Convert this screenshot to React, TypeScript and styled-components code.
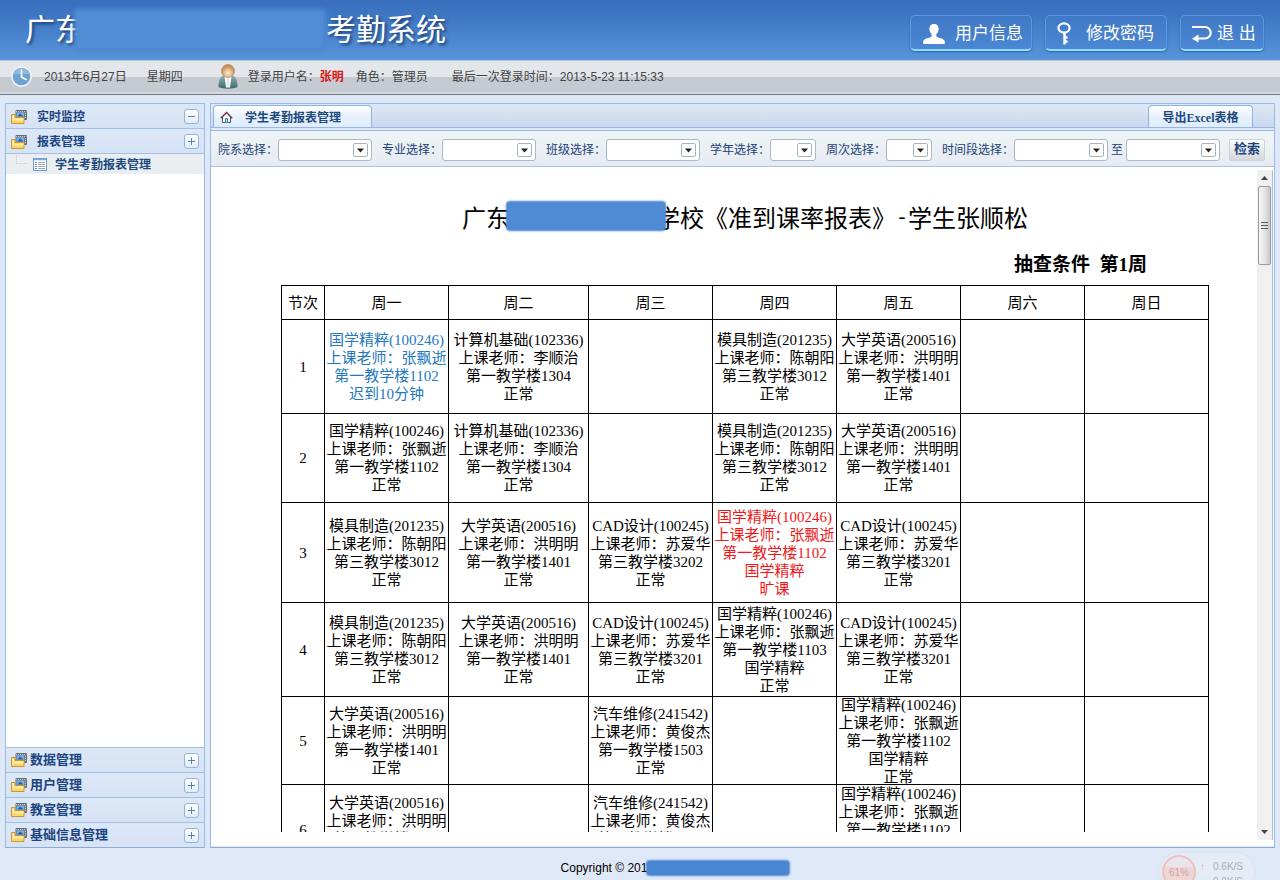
import React from 'react';
import styled, { createGlobalStyle, css } from 'styled-components';

const sans = `"Liberation Sans", "Noto Sans CJK SC", sans-serif`;
const serif = `"Liberation Serif", "Noto Sans CJK SC", serif`;

const GlobalStyle = createGlobalStyle`
  *, *::before, *::after { box-sizing: border-box; }
  body {
    margin: 0;
    background: #dfe8f6;
    font-family: ${sans};
    font-size: 12px;
    line-height: 18px;
    color: #000;
  }
  button, select { font-family: inherit; }
`;

const Page = styled.div`
  display: flex;
  flex-direction: column;
  height: 100vh;
  min-width: 1240px;
  overflow: hidden;
`;

/* ---------- header ---------- */

const Header = styled.header`
  display: flex;
  align-items: center;
  justify-content: space-between;
  flex: none;
  height: 60px;
  padding: 0 16px 0 25px;
  background: linear-gradient(#396fbd, #4179c6 35%, #5894d9);
`;

const SystemTitle = styled.h1`
  display: flex;
  align-items: center;
  margin: 0;
  color: #fff;
  font-size: 30px;
  font-weight: 400;
  line-height: 44px;
  text-shadow: 2px 2px 3px #1d3f75;
`;

const TitleMask = styled.span`
  position: relative;
  width: 246px;
  height: 36px;
  margin: 0 3px 0 -8px;
  background: #508dd5;
  box-shadow: 0 0 4px 3px #4d89d2;
`;

const HeaderActions = styled.nav`
  display: flex;
  gap: 13px;
`;

const HeaderButton = styled.button<{ $small?: boolean }>`
  display: flex;
  align-items: center;
  gap: ${(p) => (p.$small ? 5 : 9)}px;
  width: ${(p) => (p.$small ? 84 : 122)}px;
  height: 36px;
  margin-top: 6px;
  padding: 2px 0 0 ${(p) => (p.$small ? 11 : 11)}px;
  border: 1px solid #5b98e6;
  border-bottom: 2px solid #8fdcfa;
  border-radius: 5px;
  background: linear-gradient(#3f77c5, #4c88d3);
  box-shadow: 0 1px 2px #2b6a9c;
  color: #fff;
  font-size: 17px;
  line-height: 24px;
  white-space: nowrap;
`;

/* ---------- status bar ---------- */

const StatusBar = styled.div`
  display: flex;
  align-items: center;
  flex: none;
  height: 35px;
  padding: 0 11px 2px;
  border-top: 1px solid #b9c6d6;
  border-bottom: 1px solid #757a81;
  background: linear-gradient(#e3e6eb 0 16px, #c6cbd1 16px 31px, #d5dadf 31px);
  color: #444;
`;

const StatusText = styled.span<{ $gap?: number }>`
  display: flex;
  margin-left: ${(p) => p.$gap ?? 12}px;
`;

const UserName = styled.strong`
  color: #d81414;
  font-weight: 700;
`;

/* ---------- body ---------- */

const Body = styled.div`
  display: flex;
  flex: 1;
  gap: 5px;
  min-height: 0;
  padding: 8px 5px 0;
`;

const Sidebar = styled.aside`
  display: flex;
  flex-direction: column;
  flex: none;
  width: 200px;
  border: 1px solid #99bbe8;
  border-bottom-color: #8fabd0;
  background: #fff;
`;

const sectionLine = css`
  border-bottom: 1px solid #a3bfe2;
`;

const SectionHeader = styled.button<{ $large?: boolean; $line?: 'top' | 'bottom' }>`
  display: flex;
  align-items: center;
  flex: none;
  gap: ${(p) => (p.$large ? 3 : 10)}px;
  width: 100%;
  height: 25px;
  padding: ${(p) => (p.$large ? 0 : 1)}px 5px 0;
  border: 0;
  ${(p) => (p.$line === 'top' ? 'border-top: 1px solid #a3bfe2;' : sectionLine)}
  background: linear-gradient(#dde8f7, #d6e3f5);
  color: #1c4480;
  font-size: ${(p) => (p.$large ? 13 : 12)}px;
  font-weight: 700;
  line-height: 18px;
  text-align: left;
`;

const ToggleBox = styled.span`
  display: flex;
  align-items: center;
  justify-content: center;
  width: 15px;
  height: 15px;
  margin-left: auto;
  border: 1px solid #93b6da;
  border-radius: 3px;
  background: linear-gradient(#fff, #e1edfa);
`;

const Tree = styled.ul`
  flex: 1;
  margin: 0;
  padding: 0;
  list-style: none;
`;

const TreeItem = styled.li`
  display: flex;
  align-items: center;
  height: 20px;
  padding: 0 0 0 9px;
  background: #eaedf1;
`;

const TreeLink = styled.a`
  display: flex;
  align-items: center;
  gap: 8px;
  margin-left: 6px;
  padding-top: 1px;
  color: #1c4a7c;
  font-weight: 700;
  text-decoration: none;
`;

const Main = styled.main`
  display: flex;
  flex-direction: column;
  flex: 1;
  min-width: 0;
  border: 1px solid #99bbe8;
  border-bottom-color: #8fabd0;
  background: #fff;
`;

const TabStrip = styled.div`
  display: flex;
  align-items: flex-end;
  justify-content: space-between;
  flex: none;
  height: 24px;
  padding: 0 21px 0 2px;
  border-bottom: 1px solid #99b6e4;
  background: linear-gradient(#dfe8f6, #c9d8ee);
`;

const Tab = styled.button<{ $action?: boolean }>`
  display: flex;
  align-items: center;
  justify-content: ${(p) => (p.$action ? 'center' : 'flex-start')};
  gap: 12px;
  width: ${(p) => (p.$action ? 105 : 159)}px;
  height: 22px;
  padding: 2px 0 0 ${(p) => (p.$action ? 0 : 6)}px;
  border: 1px solid #8db2e3;
  border-bottom: 0;
  border-radius: 4px 4px 0 0;
  background: linear-gradient(#fff, #e8f1fc 50%, #deecfd);
  color: #1c4a7c;
  font-family: ${(p) => (p.$action ? serif : sans)};
  font-size: 12px;
  font-weight: 700;
  line-height: 18px;
`;

const FilterBar = styled.form`
  display: flex;
  align-items: center;
  flex: none;
  height: 39px;
  padding: 3px 9px 0 7px;
  border-top: 2px solid #dfe8f6;
  border-bottom: 1px solid #a9c4e4;
  background: linear-gradient(#99bbe8 0 1px, #eff5f5 1px, #e6ebf3);
  color: #1c3f77;
`;

const Field = styled.div<{ $tight?: boolean }>`
  display: flex;
  align-items: center;
  margin-right: ${(p) => (p.$tight ? 3 : 10)}px;
  white-space: nowrap;
`;

const RangeLabel = styled.label`
  margin-right: 3px;
`;

const SelectBox = styled.span<{ $short?: boolean }>`
  position: relative;
  display: flex;
  width: ${(p) => (p.$short ? 46 : 94)}px;
  height: 22px;

  svg {
    position: absolute;
    top: 4px;
    right: 4px;
    pointer-events: none;
  }
`;

const Select = styled.select`
  appearance: none;
  width: 100%;
  border: 1px solid #a9b9c6;
  border-radius: 3px;
  background: #fff;
`;

const SearchButton = styled.button`
  flex: none;
  width: 36px;
  height: 22px;
  margin-left: auto;
  padding: 0 0 3px;
  border: 1px solid #ccd3da;
  border-radius: 2px;
  background: linear-gradient(#fff, #e3e5e8 60%, #d5d7da);
  color: #1c4480;
  font-size: 13px;
  font-weight: 700;
  line-height: 18px;
`;

/* ---------- report ---------- */

const Viewer = styled.div`
  display: flex;
  flex: 1;
  min-height: 0;
  border-bottom: 1px solid #dce8f6;
`;

const Report = styled.section`
  flex: 1;
  min-width: 0;
  margin-bottom: 14px;
  padding: 34px 48px 0 70px;
  overflow: hidden;
  font-family: ${serif};
`;

const ReportTitle = styled.h2`
  display: flex;
  justify-content: center;
  margin: 0;
  font-size: 24px;
  font-weight: 400;
  line-height: 36px;
  white-space: nowrap;
`;

const ReportMask = styled.span`
  position: relative;
  width: 158px;
  height: 28px;
  margin: 1px -9px 0 -3px;
  border-radius: 3px;
  background: #4e8bd4;
  box-shadow: 0 0 2px 1px #4783cf;
`;

const Dash = styled.span`
  font-family: "Liberation Mono", monospace;
  font-size: 20px;
`;

const Condition = styled.p`
  margin: 16px 62px 8px 0;
  font-size: 19px;
  font-weight: 700;
  line-height: 24px;
  text-align: right;
  white-space: pre;
`;

const Timetable = styled.table`
  width: 100%;
  border-collapse: collapse;
  table-layout: fixed;
  font-size: 15px;
  line-height: 18px;
  text-align: center;

  th, td {
    padding: 0;
    border: 1px solid #000;
    font-weight: 400;
    white-space: nowrap;
  }
`;

const Col = styled.col<{ $w: number }>`
  width: ${(p) => p.$w}px;
`;

const HeadRow = styled.tr`
  height: 34px;
`;

const Cell = styled.div<{ $h: number; $tone?: Tone }>`
  display: flex;
  flex-direction: column;
  align-items: center;
  justify-content: center;
  height: ${(p) => p.$h - 1}px;
  overflow: hidden;
  color: ${(p) => (p.$tone === 'late' ? '#2478bd' : p.$tone === 'absent' ? '#f01818' : '#000')};
`;

const Scrollbar = styled.div`
  display: flex;
  flex-direction: column;
  align-items: center;
  flex: none;
  width: 16px;
  margin: 3px 1px 6px 0;
  border-right: 1px solid #9fbfe6;
  background: #f0f0f1;
`;

const ScrollArrow = styled.svg`
  flex: none;
  width: 15px;
  height: 16px;
`;

const Thumb = styled.div`
  display: flex;
  align-items: center;
  justify-content: center;
  width: 13px;
  height: 79px;
  border: 1px solid #9a9b9e;
  border-radius: 2px;
  background: linear-gradient(90deg, #f5f5f6, #e4e5e7 50%, #c6c7ca);
`;

const Track = styled.div`
  flex: 1;
`;

/* ---------- footer ---------- */

const Footer = styled.footer`
  position: relative;
  display: flex;
  align-items: center;
  justify-content: center;
  flex: none;
  height: 32px;
  padding: 7px 0 0 70px;
  overflow: hidden;
`;

const FooterMask = styled.span`
  position: relative;
  width: 142px;
  height: 14px;
  border-radius: 3px;
  background: #4987d3;
  box-shadow: 0 0 2px 1px #4c89d3;
`;

const SpeedWidget = styled.div`
  position: absolute;
  top: 5px;
  right: 26px;
  display: flex;
  gap: 4px;
  width: 94px;
  height: 38px;
  border-radius: 19px;
  background: #e6ecf6;
  box-shadow: 0 0 2px #d3dbe8;
  color: #a9adb6;
  font-size: 10px;
  line-height: 15px;
`;

const Gauge = styled.div`
  width: 34px;
  height: 34px;
  margin: 2px 0 0 2px;
  border: 2px solid #ecc2c0;
  border-radius: 50%;
  background: linear-gradient(#e9e5ec 35%, #efd5d4 35%);
  color: #cda5a6;
  line-height: 32px;
  text-align: center;
`;

const Speeds = styled.div`
  display: grid;
  grid-template-columns: 13px auto;
  align-content: start;
  padding-top: 6px;
`;

const Arrow = styled.span<{ $down?: boolean }>`
  color: ${(p) => (p.$down ? '#9fbfae' : '#e6a58d')};
`;

/* ---------- icons ---------- */

const ClockIcon = () => (
  <svg width="23" height="24" viewBox="0 0 23 24" aria-hidden="true">
    <circle cx="10.500" cy="12" r="10.500" fill="#cbd3dc" />
    <circle cx="10.500" cy="11.500" r="10.300" fill="#f2f6fa" />
    <circle cx="10.500" cy="11.500" r="8.800" fill="#6ea3d1" />
    <path d="M2.500 9a8.300 8.300 0 0 1 16 0z" fill="#8fbadd" />
    <path d="M10.500 5v7l4.500 2.500" fill="none" stroke="#fff" strokeWidth="1.600" strokeLinecap="round" />
  </svg>
);

const UserIcon = () => (
  <svg width="20" height="25" viewBox="0 0 20 25" aria-hidden="true">
    <defs>
      <linearGradient id="coat" x2="0" y2="1">
        <stop stopColor="#8fb0b0" />
        <stop offset="1" stopColor="#3f6a6e" />
      </linearGradient>
      <radialGradient id="face" cy=".65">
        <stop stopColor="#fff0d6" />
        <stop offset="1" stopColor="#c98f58" />
      </radialGradient>
    </defs>
    <path d="M0.500 23c0-7 2-11 6-11.500h7c4 .5 6 4.500 6 11.500-4 2.200-15 2.200-19 0z" fill="url(#coat)" />
    <path d="M6.500 12h7L12 23.500H8z" fill="#fff" />
    <path d="M9.200 13.500h1.600l.8 8-1.600 2-1.600-2z" fill="#dfe6e8" />
    <circle cx="10" cy="7" r="6.500" fill="url(#face)" stroke="#b07f50" strokeWidth=".6" />
  </svg>
);

const FolderIcon = () => (
  <svg width="16" height="16" viewBox="0 0 16 16" aria-hidden="true">
    <path d="M5 1.500h10.500v9H13l-8-2z" fill="#747e88" stroke="#626b75" />
    <path d="M5 2.500h10.500M14.500 4v6" stroke="#c3c9cf" strokeDasharray="1 1" />
    <path d="M5.500 3.500h7.500v5H5.500z" fill="#74aee6" />
    <path d="M6.500 7.500l2.500-3 3.500 3z" fill="#2d5a94" />
    <path d="M.5 14.500V5.500h3.500v3h9v6z" fill="#fbd568" stroke="#cf9338" />
    <path d="M1.500 9.500h11v2h-11z" fill="#fff0a8" />
    <path d="M1.500 6.500h1.500v3H1.500z" fill="#fff4cf" />
  </svg>
);

const SheetIcon = () => (
  <svg width="14" height="13" viewBox="0 0 14 13" aria-hidden="true">
    <rect x=".5" y=".5" width="13" height="12" fill="#fff" stroke="#6d9ac8" />
    <path d="M1 1.500h12" stroke="#7eaede" strokeWidth="1.500" />
    <path d="M5 4.500h7M5 6.500h7M5 8.500h7M5 10.500h7" stroke="#9aa9bb" />
    <path d="M2 4.500h2M2 6.500h2M2 8.500h2M2 10.500h2" stroke="#5c8fca" />
  </svg>
);

const TreeElbow = () => (
  <svg width="12" height="19" viewBox="0 0 12 19" aria-hidden="true">
    <path d="M1.500 0v9M1.500 8.500H12" fill="none" stroke="#c2c6cb" strokeDasharray="1 1" />
  </svg>
);

const HomeIcon = () => (
  <svg width="13" height="13" viewBox="0 0 13 13" aria-hidden="true">
    <path d="M2.500 6v5.500h8V6" fill="#fff" stroke="#3b5d7d" />
    <path d="M5.500 11.500v-4h2v4" fill="#cfe3f5" stroke="#3b6f9d" />
    <path d="M.8 7.200L6.500 1.500l5.700 5.700" fill="none" stroke="#7b3036" strokeWidth="1.400" />
  </svg>
);

const ToggleIcon = ({ open }: { open?: boolean }) => (
  <svg width="9" height="9" viewBox="0 0 9 9" aria-hidden="true">
    <path d={open ? 'M1 4.500h7' : 'M1 4.500h7M4.500 1v7'} stroke="#5a80ad" />
  </svg>
);

const DropIcon = () => (
  <svg width="15" height="15" viewBox="0 0 15 15" aria-hidden="true">
    <rect x=".5" y=".5" width="14" height="13" rx="1.500" fill="#fff" stroke="#a5b4c1" />
    <path d="M4 5.500h7L7.500 9.500z" fill="#222" />
  </svg>
);

const PersonIcon = () => (
  <svg width="24" height="22" viewBox="0 0 24 22" aria-hidden="true">
    <path
      d="M12 1c3 0 4.600 2 4.600 4.800 0 2.400-.9 4.200-2.200 5.200v2.600c1.600 1.400 7.800 2 8.400 4.600V21H1.200v-2.800c.6-2.600 6.800-3.200 8.400-4.600V11C8.300 10 7.400 8.200 7.400 5.800 7.400 3 9 1 12 1z"
      fill="#fff"
    />
  </svg>
);

const KeyIcon = () => (
  <svg width="20" height="24" viewBox="0 0 20 24" aria-hidden="true">
    <ellipse cx="7" cy="6" rx="5.600" ry="4.600" fill="none" stroke="#fff" strokeWidth="2.200" />
    <path d="M7.500 10.500V22.500M7.500 15.500h3M7.500 19.500h3" fill="none" stroke="#fff" strokeWidth="2.400" />
  </svg>
);

const ExitIcon = () => (
  <svg width="20" height="18" viewBox="0 0 20 18" aria-hidden="true">
    <path d="M0 2h13a5.500 5.500 0 0 1 0 11.500H5" fill="none" stroke="#fff" strokeWidth="2.200" />
    <path d="M0 13.800L6.500 9.500v8z" fill="#fff" />
  </svg>
);

/* ---------- data ---------- */

type Tone = 'late' | 'absent';
type Lesson = { lines: string[]; tone?: Tone } | null;

const lesson = (course: string, teacher: string, room: string, ...rest: string[]): Lesson => ({
  lines: [course, `上课老师：${teacher}`, room, ...rest],
});
const toned = (item: Lesson, tone: Tone): Lesson => item && { ...item, tone };

const guoxue = (room: string, ...rest: string[]) => lesson('国学精粹(100246)', '张飘逝', room, ...rest);
const mould = lesson('模具制造(201235)', '陈朝阳', '第三教学楼3012', '正常');
const english = lesson('大学英语(200516)', '洪明明', '第一教学楼1401', '正常');
const computer = lesson('计算机基础(102336)', '李顺治', '第一教学楼1304', '正常');
const cad = (room: string) => lesson('CAD设计(100245)', '苏爱华', room, '正常');
const auto = lesson('汽车维修(241542)', '黄俊杰', '第一教学楼1503', '正常');

const days = ['周一', '周二', '周三', '周四', '周五', '周六', '周日'];
const columns = [43, 124, 140, 124, 124, 124, 124, 124];

const rows: { height: number; lessons: Lesson[] }[] = [
  {
    height: 94,
    lessons: [toned(guoxue('第一教学楼1102', '迟到10分钟'), 'late'), computer, null, mould, english, null, null],
  },
  { height: 89, lessons: [guoxue('第一教学楼1102', '正常'), computer, null, mould, english, null, null] },
  {
    height: 100,
    lessons: [
      mould,
      english,
      cad('第三教学楼3202'),
      toned(guoxue('第一教学楼1102', '国学精粹', '旷课'), 'absent'),
      cad('第三教学楼3201'),
      null,
      null,
    ],
  },
  {
    height: 94,
    lessons: [
      mould,
      english,
      cad('第三教学楼3201'),
      guoxue('第一教学楼1103', '国学精粹', '正常'),
      cad('第三教学楼3201'),
      null,
      null,
    ],
  },
  { height: 88, lessons: [english, null, auto, null, guoxue('第一教学楼1102', '国学精粹', '正常'), null, null] },
  { height: 90, lessons: [english, null, auto, null, guoxue('第一教学楼1102', '国学精粹', '正常'), null, null] },
];

const filters = [
  { id: 'department', label: '院系选择：' },
  { id: 'major', label: '专业选择：' },
  { id: 'class', label: '班级选择：' },
  { id: 'year', label: '学年选择：', short: true },
  { id: 'week', label: '周次选择：', short: true },
];

const Dropdown = ({ id, short }: { id: string; short?: boolean }) => (
  <SelectBox $short={short}>
    <Select id={id} />
    <DropIcon />
  </SelectBox>
);

const Section = ({ label, open, large }: { label: string; open?: boolean; large?: boolean }) => (
  <SectionHeader type="button" $large={large} $line={large ? 'top' : 'bottom'}>
    <FolderIcon />
    {label}
    <ToggleBox>
      <ToggleIcon open={open} />
    </ToggleBox>
  </SectionHeader>
);

export default function App() {
  return (
    <Page>
      <GlobalStyle />
      <Header>
        <SystemTitle>
          广东
          <TitleMask />
          考勤系统
        </SystemTitle>
        <HeaderActions>
          <HeaderButton type="button">
            <PersonIcon />
            用户信息
          </HeaderButton>
          <HeaderButton type="button">
            <KeyIcon />
            修改密码
          </HeaderButton>
          <HeaderButton type="button" $small>
            <ExitIcon />
            退 出
          </HeaderButton>
        </HeaderActions>
      </Header>

      <StatusBar>
        <ClockIcon />
        <StatusText $gap={10}>2013年6月27日</StatusText>
        <StatusText $gap={20}>星期四</StatusText>
        <StatusText $gap={35}>
          <UserIcon />
        </StatusText>
        <StatusText $gap={10}>
          登录用户名：<UserName>张明</UserName>
        </StatusText>
        <StatusText>角色：管理员</StatusText>
        <StatusText $gap={24}>最后一次登录时间：2013-5-23 11:15:33</StatusText>
      </StatusBar>

      <Body>
        <Sidebar>
          <Section label="实时监控" open />
          <Section label="报表管理" />
          <Tree>
            <TreeItem>
              <TreeElbow />
              <TreeLink href="#report">
                <SheetIcon />
                学生考勤报表管理
              </TreeLink>
            </TreeItem>
          </Tree>
          <Section label="数据管理" large />
          <Section label="用户管理" large />
          <Section label="教室管理" large />
          <Section label="基础信息管理" large />
        </Sidebar>

        <Main>
          <TabStrip>
            <Tab type="button">
              <HomeIcon />
              学生考勤报表管理
            </Tab>
            <Tab type="button" $action>
              导出Excel表格
            </Tab>
          </TabStrip>
          <FilterBar>
            {filters.map((f) => (
              <Field key={f.id}>
                <label htmlFor={f.id}>{f.label}</label>
                <Dropdown id={f.id} short={f.short} />
              </Field>
            ))}
            <Field $tight>
              <label htmlFor="from">时间段选择：</label>
              <Dropdown id="from" />
            </Field>
            <Field $tight>
              <RangeLabel htmlFor="to">至</RangeLabel>
              <Dropdown id="to" />
            </Field>
            <SearchButton type="button">检索</SearchButton>
          </FilterBar>

          <Viewer>
            <Report id="report">
              <ReportTitle>
                广东
                <ReportMask />
                学校《准到课率报表》<Dash>-</Dash>学生张顺松
              </ReportTitle>
              <Condition>抽查条件  第1周</Condition>
              <Timetable>
                <colgroup>
                  {columns.map((w, i) => (
                    <Col key={i} $w={w} />
                  ))}
                </colgroup>
                <thead>
                  <HeadRow>
                    <th scope="col">节次</th>
                    {days.map((d) => (
                      <th key={d} scope="col">
                        {d}
                      </th>
                    ))}
                  </HeadRow>
                </thead>
                <tbody>
                  {rows.map((row, r) => (
                    <tr key={r}>
                      <th scope="row">{r + 1}</th>
                      {row.lessons.map((item, c) => (
                        <td key={c}>
                          <Cell $h={row.height} $tone={item?.tone}>
                            {item?.lines.map((line, l) => (
                              <span key={l}>{line}</span>
                            ))}
                          </Cell>
                        </td>
                      ))}
                    </tr>
                  ))}
                </tbody>
              </Timetable>
            </Report>
            <Scrollbar aria-hidden="true">
              <ScrollArrow viewBox="0 0 15 16">
                <path d="M4 10h7L7.500 6z" fill="#444" />
              </ScrollArrow>
              <Thumb>
                <svg width="7" height="8" viewBox="0 0 7 8">
                  <path d="M0 .5h7M0 3.500h7M0 6.500h7" stroke="#55585d" />
                </svg>
              </Thumb>
              <Track />
              <ScrollArrow viewBox="0 0 15 16">
                <path d="M4 6h7L7.500 10z" fill="#444" />
              </ScrollArrow>
            </Scrollbar>
          </Viewer>
        </Main>
      </Body>

      <Footer>
        Copyright © 201
        <FooterMask />
        <SpeedWidget>
          <Gauge>61%</Gauge>
          <Speeds>
            <Arrow>↑</Arrow>
            <span>0.6K/S</span>
            <Arrow $down>↓</Arrow>
            <span>0.8K/S</span>
          </Speeds>
        </SpeedWidget>
      </Footer>
    </Page>
  );
}
